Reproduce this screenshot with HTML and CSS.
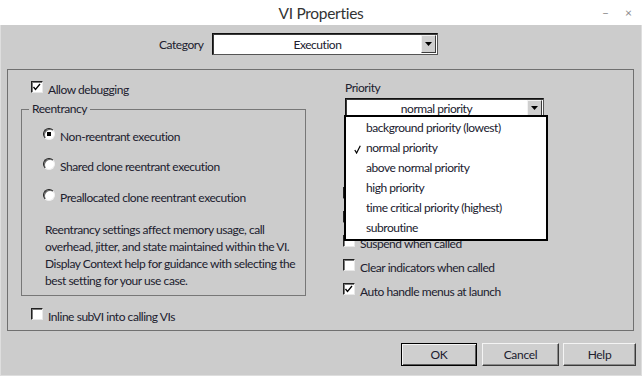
FILE: index.html
```html
<!DOCTYPE html>
<html>
<head>
<meta charset="utf-8">
<title>VI Properties</title>
<link rel="stylesheet" href="styles.css">
</head>
<body>
<div class="window">
  <div class="titlebar">
    <span></span>
    <span class="title">VI Properties</span>
    <span class="controls"><span class="min">&#8211;</span><span class="close">&#215;</span></span>
  </div>

  <div class="category-row">
    <span class="cat-label">Category</span>
    <div class="select select-wide">
      <span class="select-value">Execution</span>
      <span class="select-btn"><svg width="7" height="4" viewBox="0 0 7 4"><polygon points="0,0 7,0 3.5,4" fill="#000"/></svg></span>
    </div>
  </div>

  <div class="panel">
    <div class="col-left">
      <div class="check-row allow">
        <span class="box"><svg width="10" height="10" viewBox="0 0 10 10"><polyline points="1.5,5 3.5,7.5 8,2" fill="none" stroke="#000" stroke-width="1.3"/></svg></span>
        <span>Allow debugging</span>
      </div>

      <fieldset class="group">
        <legend>Reentrancy</legend>
        <div class="radio-row r1"><span class="radio on"></span><span>Non-reentrant execution</span></div>
        <div class="radio-row r2"><span class="radio"></span><span>Shared clone reentrant execution</span></div>
        <div class="radio-row r3"><span class="radio"></span><span>Preallocated clone reentrant execution</span></div>
        <p class="note">Reentrancy settings affect memory usage, call<br>overhead, jitter, and state maintained within the VI.<br>Display Context help for guidance with selecting the<br>best setting for your use case.</p>
      </fieldset>

      <div class="check-row inline">
        <span class="box"></span>
        <span>Inline subVI into calling VIs</span>
      </div>
    </div>

    <div class="col-right">
      <div class="field-label">Priority</div>
      <div class="select-wrap">
        <div class="select select-prio">
          <span class="select-value">normal priority</span>
          <span class="select-btn"><svg width="7" height="4" viewBox="0 0 7 4"><polygon points="0,0 7,0 3.5,4" fill="#000"/></svg></span>
        </div>
        <ul class="menu">
          <li>background priority (lowest)</li>
          <li class="checked"><svg class="tick" width="7" height="9" viewBox="0 0 7 9"><polyline points="0.8,5 2.6,8 6.3,0.8" fill="none" stroke="#000" stroke-width="1.2"/></svg>normal priority</li>
          <li>above normal priority</li>
          <li>high priority</li>
          <li>time critical priority (highest)</li>
          <li>subroutine</li>
        </ul>
      </div>
      <div class="field-label pref">Preferred Execution System</div>
      <div class="select select-prio">
        <span class="select-value">same as caller</span>
        <span class="select-btn"><svg width="7" height="4" viewBox="0 0 7 4"><polygon points="0,0 7,0 3.5,4" fill="#000"/></svg></span>
      </div>
      <div class="checks">
        <div class="check-row"><span class="box"></span><span>Enable automatic error handling</span></div>
        <div class="check-row"><span class="box"></span><span>Run when opened</span></div>
        <div class="check-row"><span class="box"></span><span>Suspend when called</span></div>
        <div class="check-row"><span class="box"></span><span>Clear indicators when called</span></div>
        <div class="check-row"><span class="box"><svg width="10" height="10" viewBox="0 0 10 10"><polyline points="1.5,5 3.5,7.5 8,2" fill="none" stroke="#000" stroke-width="1.3"/></svg></span><span>Auto handle menus at launch</span></div>
      </div>
    </div>
  </div>

  <div class="buttons">
    <button class="btn btn-ok">OK</button>
    <button class="btn btn-cancel">Cancel</button>
    <button class="btn btn-help">Help</button>
  </div>
</div>
</body>
</html>
```

FILE: styles.css
```css
* { box-sizing: border-box; }
html, body { margin: 0; padding: 0; }
body {
  width: 642px;
  height: 376px;
  overflow: hidden;
  font-family: Lato, "Noto Sans", sans-serif;
  font-size: 12px;
  letter-spacing: -0.45px;
  color: #20202e;
  background: #cccccc;
}
.window {
  width: 642px;
  height: 376px;
  background: #cccccc;
  border: 1px solid #dedede;
  border-top: none;
  display: flex;
  flex-direction: column;
}
.titlebar {
  height: 25px;
  background: #ffffff;
  display: grid;
  grid-template-columns: 1fr auto 1fr;
  align-items: center;
  margin: 0 -1px;
}
.title {
  font-size: 15.5px;
  color: #333333;
  letter-spacing: -0.3px;
}
.controls {
  justify-self: end;
  display: flex;
  gap: 16px;
  padding-right: 10px;
  color: #8a8a8a;
  font-size: 12px;
  letter-spacing: 0;
}
.category-row {
  display: flex;
  align-items: center;
  height: 30px;
  padding-top: 8px;
  padding-left: 158px;
  gap: 9px;
}
.select {
  display: flex;
  align-items: stretch;
  background: #ffffff;
  border: 1px solid #555555;
  border-top-color: #111111;
  border-left-color: #111111;
  box-shadow: inset 1px 1px #3a3a3a;
}
.select-wide { width: 226px; height: 22px; }
.select-value {
  flex: 1;
  display: flex;
  align-items: center;
  justify-content: center;
}
.select-btn {
  width: 15px;
  margin: 1px 1px 1px 0;
  background: #cfcfcf;
  border: 1px solid;
  border-color: #f2f2f2 #3c3c3c #3c3c3c #f2f2f2;
  display: flex;
  align-items: center;
  justify-content: center;
}
.panel {
  margin: 14px 0 0 6px;
  width: 627px;
  height: 262px;
  border: 1px solid #707070;
  display: grid;
  grid-template-columns: 335px 1fr;
}
.col-left { padding: 12px 0 0 13px; }
.check-row {
  display: flex;
  align-items: flex-start;
  height: 16px;
  line-height: 16px;
  gap: 5px;
  white-space: nowrap;
}
.box {
  width: 12px;
  height: 12px;
  margin-top: -1px;
  background: #ffffff;
  border: 1px solid;
  border-color: #202020 #e8e8e8 #e8e8e8 #202020;
  box-shadow: inset 1px 1px #7a7a7a;
  display: flex;
  align-items: center;
  justify-content: center;
  flex: none;
}
.allow { margin-left: 10px; }
.group {
  margin: 3px 0 0 0;
  width: 285px;
  padding: 0 0 6px 7px;
  border: 1px solid #777777;
  min-width: 0;
}
.group legend {
  padding: 0 3px;
  line-height: 16px;
}
.radio-row {
  display: flex;
  align-items: flex-start;
  height: 16px;
  line-height: 16px;
  gap: 5px;
  padding-left: 14px;
  white-space: nowrap;
}
.r1 { margin-top: 12px; }
.r2 { margin-top: 14px; }
.r3 { margin-top: 15px; }
.radio {
  width: 12px;
  height: 12px;
  margin-top: -1px;
  border-radius: 50%;
  background: #ffffff;
  border: 1px solid;
  border-color: #1e1e1e #f0f0f0 #f0f0f0 #1e1e1e;
  box-shadow: inset 1px 1px #6a6a6a;
  display: flex;
  align-items: center;
  justify-content: center;
  flex: none;
}
.radio.on::after {
  content: "";
  width: 4px;
  height: 4px;
  background: #000;
}
.note {
  margin: 15px 0 0 16px;
  line-height: 17px;
  white-space: nowrap;
}
.inline { margin: 13px 0 0 10px; }
.col-right { padding-top: 10px; }
.field-label {
  margin-left: 2px;
  line-height: 16px;
}
.field-label.pref { margin-top: 8px; }
.select-wrap { position: relative; margin-top: 2px; }
.select-prio {
  width: 199px;
  height: 20px;
  margin-left: 2px;
}
.col-right > .select-prio { margin-top: 2px; }
.menu {
  position: absolute;
  top: 17px;
  left: 1px;
  width: 204px;
  margin: 0;
  padding: 1px 0;
  list-style: none;
  background: #ffffff;
  border: 2px solid #000000;
  z-index: 5;
}
.menu li {
  height: 20px;
  line-height: 20px;
  padding-left: 20px;
  position: relative;
  white-space: nowrap;
}
.tick {
  position: absolute;
  left: 8px;
  top: 7px;
}
.checks {
  margin-top: 24px;
  display: flex;
  flex-direction: column;
  gap: 8px;
}
.buttons {
  display: flex;
  justify-content: flex-end;
  margin-top: 12px;
  padding-right: 5px;
}
.btn {
  height: 23px;
  padding: 0;
  font-family: inherit;
  font-size: 12px;
  letter-spacing: -0.3px;
  color: #20202e;
  background: #cfcfcf;
  border: 1px solid;
  border-color: #f4f4f4 #3a3a3a #3a3a3a #f4f4f4;
  box-shadow: inset -1px -1px #8a8a8a;
}
.btn-ok {
  width: 76px;
  border: 1px solid #000000;
  box-shadow: inset 1px 1px #f4f4f4, inset -1px -1px #5a5a5a;
}
.btn-cancel { width: 77px; margin-left: 5px; }
.btn-help { width: 73px; margin-left: 4px; }
```
